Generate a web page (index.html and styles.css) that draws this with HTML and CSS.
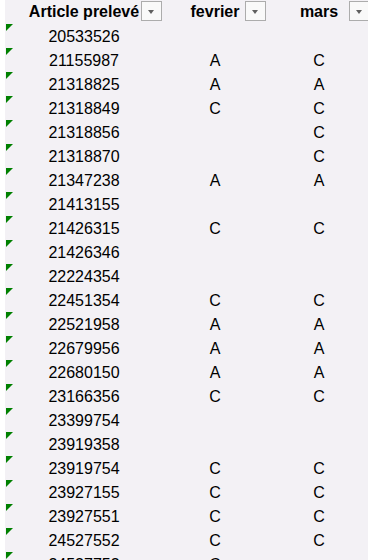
FILE: index.html
```html
<!DOCTYPE html>
<html lang="fr">
<head>
<meta charset="utf-8">
<link rel="stylesheet" href="styles.css">
<title>Feuille</title>
</head>
<body>
<div class="sheet">
  <div class="hcell">Article prelevé<span class="filter"></span></div>
  <div class="hcell">fevrier<span class="filter"></span></div>
  <div class="hcell">mars<span class="filter"></span></div>

  <div class="cell num flag">20533526</div><div class="cell"></div><div class="cell"></div>
  <div class="cell num flag">21155987</div><div class="cell">A</div><div class="cell">C</div>
  <div class="cell num flag">21318825</div><div class="cell">A</div><div class="cell">A</div>
  <div class="cell num flag">21318849</div><div class="cell">C</div><div class="cell">C</div>
  <div class="cell num flag">21318856</div><div class="cell"></div><div class="cell">C</div>
  <div class="cell num flag">21318870</div><div class="cell"></div><div class="cell">C</div>
  <div class="cell num flag">21347238</div><div class="cell">A</div><div class="cell">A</div>
  <div class="cell num flag">21413155</div><div class="cell"></div><div class="cell"></div>
  <div class="cell num flag">21426315</div><div class="cell">C</div><div class="cell">C</div>
  <div class="cell num flag">21426346</div><div class="cell"></div><div class="cell"></div>
  <div class="cell num flag">22224354</div><div class="cell"></div><div class="cell"></div>
  <div class="cell num flag">22451354</div><div class="cell">C</div><div class="cell">C</div>
  <div class="cell num flag">22521958</div><div class="cell">A</div><div class="cell">A</div>
  <div class="cell num flag">22679956</div><div class="cell">A</div><div class="cell">A</div>
  <div class="cell num flag">22680150</div><div class="cell">A</div><div class="cell">A</div>
  <div class="cell num flag">23166356</div><div class="cell">C</div><div class="cell">C</div>
  <div class="cell num flag">23399754</div><div class="cell"></div><div class="cell"></div>
  <div class="cell num flag">23919358</div><div class="cell"></div><div class="cell"></div>
  <div class="cell num flag">23919754</div><div class="cell">C</div><div class="cell">C</div>
  <div class="cell num flag">23927155</div><div class="cell">C</div><div class="cell">C</div>
  <div class="cell num flag">23927551</div><div class="cell">C</div><div class="cell">C</div>
  <div class="cell num flag">24527552</div><div class="cell">C</div><div class="cell">C</div>
  <div class="cell num flag">24527753</div><div class="cell">C</div><div class="cell"></div>
</div>
</body>
</html>
```
FILE: styles.css
```css
html {
  background: #ffffff;
}
body {
  margin: 0;
  height: 560px;
  overflow: hidden;
  background: #ffffff;
  font-family: "Liberation Sans", Arial, sans-serif;
  font-size: 16px;
  color: #000000;
}
.sheet {
  margin-left: 5px;
  height: 560px;
  overflow: hidden;
  background: #f3f1f5;
  display: grid;
  grid-template-columns: 158px 104px 104px;
  grid-auto-rows: 24px;
}
.hcell {
  position: relative;
  font-weight: bold;
  text-align: center;
  line-height: 24px;
  white-space: nowrap;
}
.filter {
  position: absolute;
  top: 1px;
  right: 1px;
  width: 19px;
  height: 18px;
  border: 1px solid #acacac;
  background: #f9f9f9;
}
.filter::after {
  content: "";
  position: absolute;
  left: 6px;
  top: 8px;
  width: 0;
  height: 0;
  border-left: 3.5px solid transparent;
  border-right: 3.5px solid transparent;
  border-top: 4px solid #606060;
}
.cell {
  position: relative;
  text-align: center;
  line-height: 24px;
  padding-top: 1px;
  box-sizing: border-box;
  white-space: nowrap;
}
.flag::before {
  content: "";
  position: absolute;
  left: 1px;
  top: 0;
  width: 7px;
  height: 7px;
  background: #008000;
  clip-path: polygon(0 0, 100% 0, 0 100%);
}
```
